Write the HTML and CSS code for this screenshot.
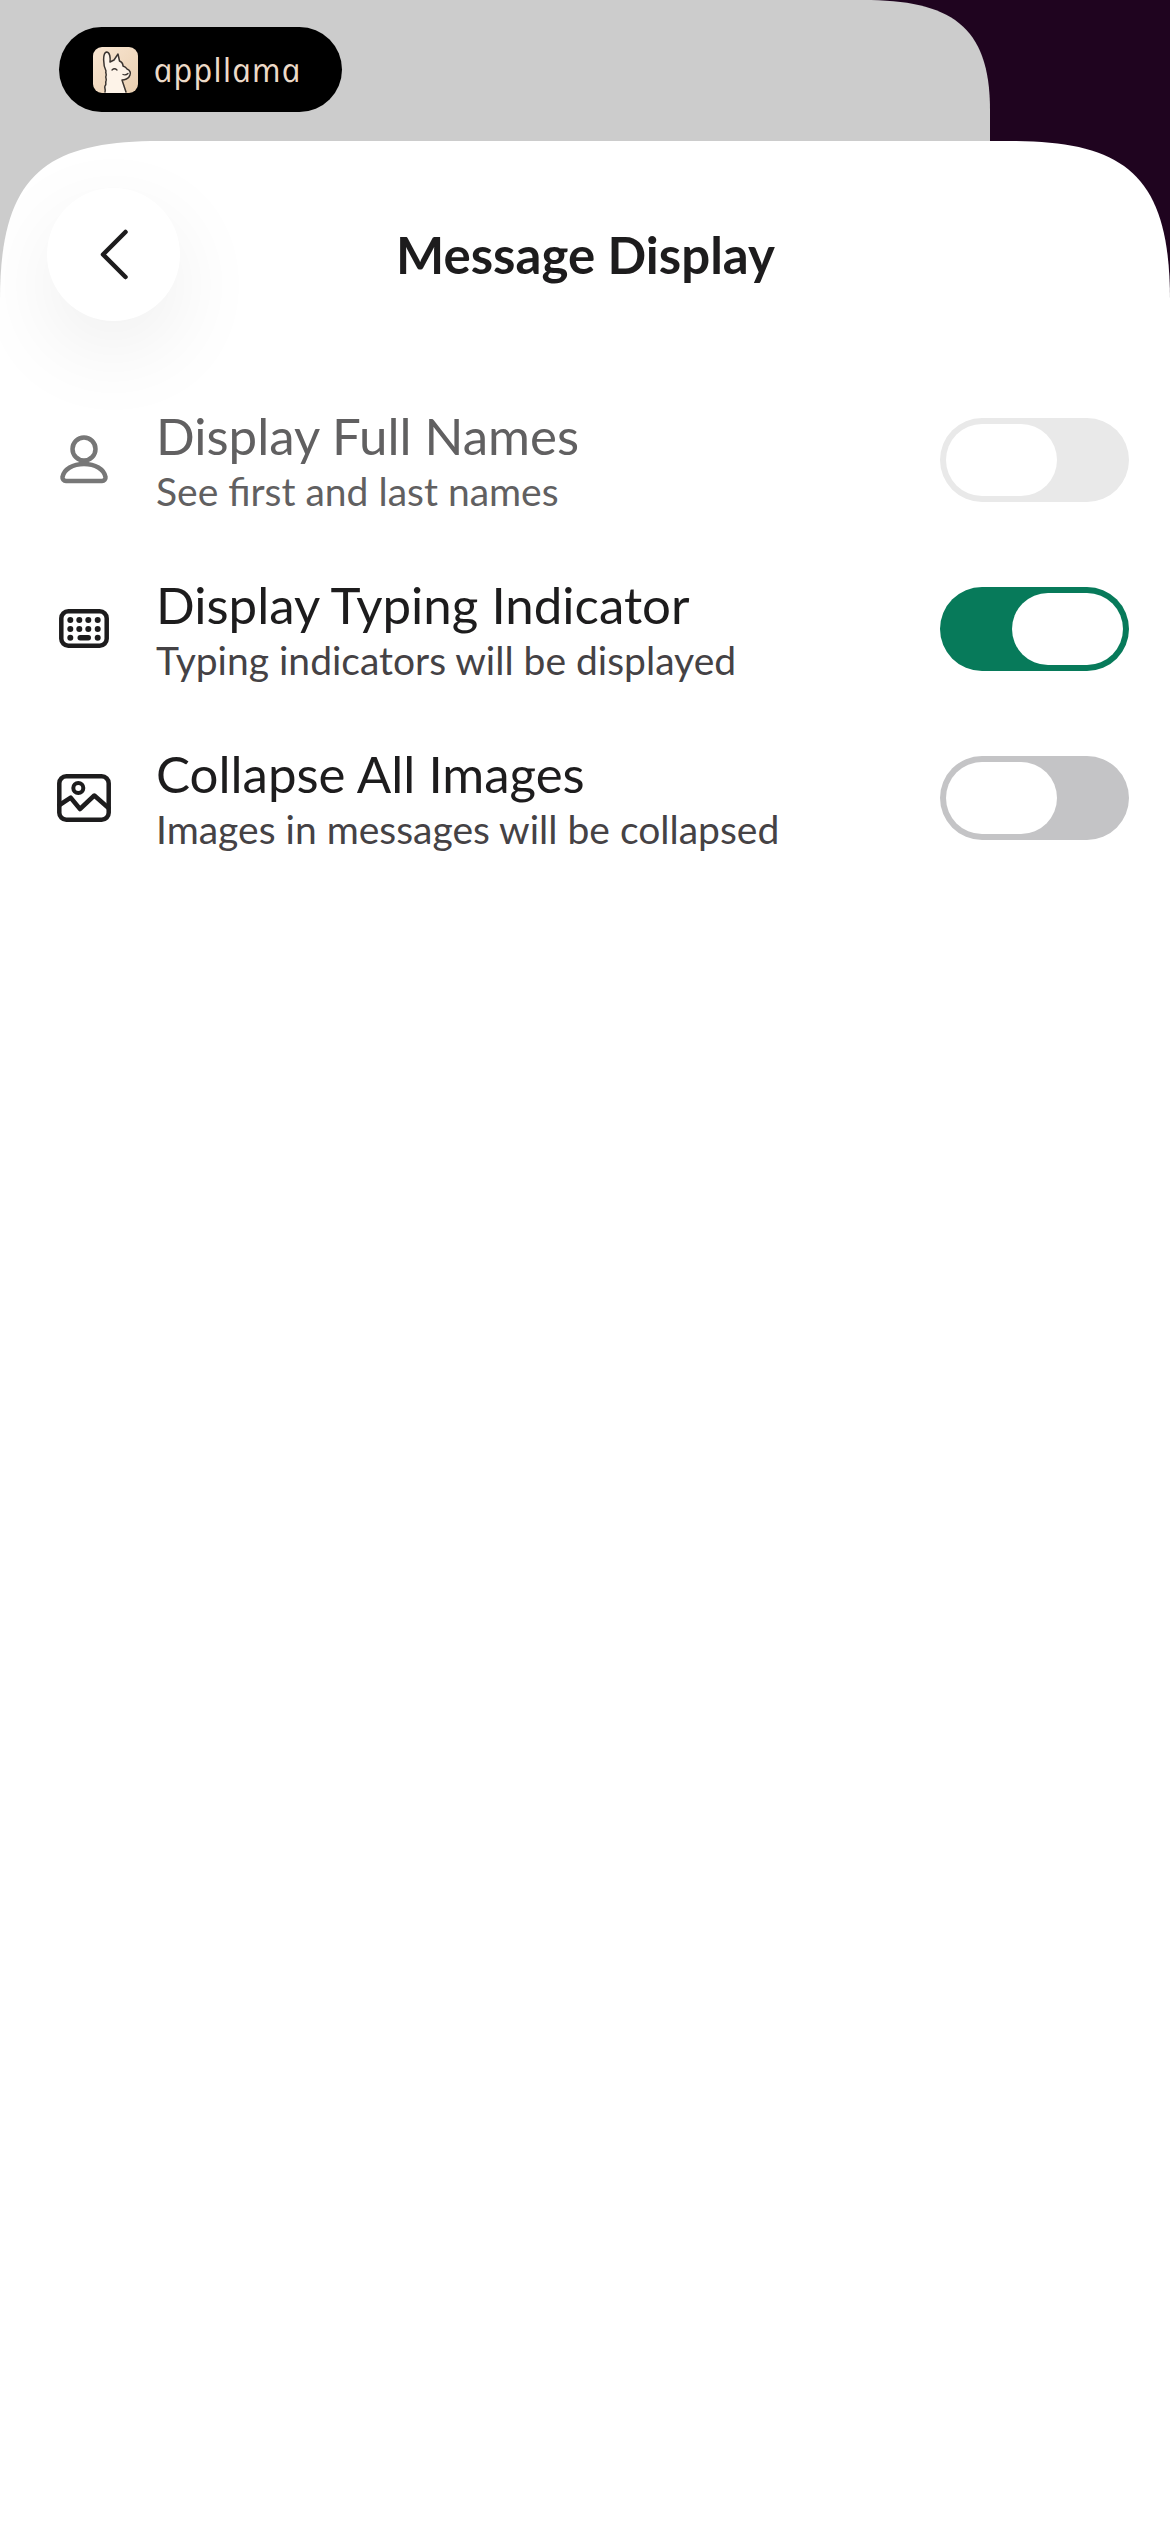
FILE: index.html
```html
<!DOCTYPE html>
<html lang="en">
<head>
<meta charset="utf-8">
<title>Message Display</title>
<link rel="stylesheet" href="styles.css">
</head>
<body>
<div class="backdrop">
  <div class="brand">
    <svg class="brand-icon" viewBox="0 0 45 46" aria-hidden="true">
      <defs><linearGradient id="lg" x1="0" y1="0" x2="1" y2="1"><stop offset="0" stop-color="#f9e6d2"/><stop offset="1" stop-color="#e9cfb0"/></linearGradient></defs>
      <rect width="45" height="46" rx="9" fill="url(#lg)"/>
      <path d="M13 24 C10 18 9.500 6 13.500 5 C17 5 17.500 11 17 15 L21 13 L25 7 L26.500 14 C29 15 30 17 30 19 C33 20 33.500 21 34 22 C37 23 38 26 37 28 C36 32 31 33 29 33 L33 46 H12 C11 40 14 34 13 24 Z" fill="#fdf3e8"/>
      <path d="M13 24 C10 18 9.500 6 13.500 5 C17 5 17.500 11 17 15 M17 15 L21 13 L25 7 L26.500 14 C29 15 30 17 30 19 C33 20 33.500 21 34 22 C37 23 38 26 37 28 C36 32 31 33 29 33 L33 45 M13 24 c-1 2 1 3 0 5 c-1 2 1 2 0 5 c-1 2 1 3 -1 5 c-1 2 1 3 0 6" fill="none" stroke="#3a3430" stroke-width="1.500" stroke-linecap="round" stroke-linejoin="round"/>
      <path d="M19 23 q2.500 -2.500 5 0 M30 27.500 q3 1 5 -1" fill="none" stroke="#3a3430" stroke-width="1.300" stroke-linecap="round"/>
    </svg>
    <span class="brand-name">appllama</span>
  </div>
</div>
<main class="sheet">
  <header class="topbar">
    <button class="back" type="button" aria-label="Back">
      <svg viewBox="0 0 133 133" class="back-icon" aria-hidden="true"><path d="M78.500 44 L56 66.500 L78.500 89"/></svg>
    </button>
    <h1 class="title">Message Display</h1>
  </header>
  <section class="rows">
    <div class="row row-muted">
      <svg class="row-icon" viewBox="0 0 60 60" aria-hidden="true"><circle cx="30" cy="19" r="11.500"/><path d="M12 51 H48 a3.500 3.500 0 0 0 3.500-4 C50 39 41 34 30 34 S10 39 8.500 47 a3.500 3.500 0 0 0 3.500 4z"/></svg>
      <div class="row-text"><div class="row-title">Display Full Names</div><div class="row-sub">See first and last names</div></div>
      <div class="toggle toggle-disabled"><span class="thumb"></span></div>
    </div>
    <div class="row">
      <svg class="row-icon" viewBox="0 0 60 60" aria-hidden="true"><rect x="7.300" y="12.300" width="45.400" height="34.400" rx="7"/><g class="dots"><circle cx="16.300" cy="21" r="3"/><circle cx="25.300" cy="21" r="3"/><circle cx="34.300" cy="21" r="3"/><circle cx="43.700" cy="21" r="3"/><circle cx="16.300" cy="30" r="3"/><circle cx="25.300" cy="30" r="3"/><circle cx="34.300" cy="30" r="3"/><circle cx="43.700" cy="30" r="3"/><circle cx="16.300" cy="38.700" r="3"/><rect x="23.500" y="36" width="13.500" height="5.500" rx="2.700"/><circle cx="43.700" cy="38.700" r="3"/></g></svg>
      <div class="row-text"><div class="row-title">Display Typing Indicator</div><div class="row-sub">Typing indicators will be displayed</div></div>
      <div class="toggle toggle-on"><span class="thumb"></span></div>
    </div>
    <div class="row">
      <svg class="row-icon" viewBox="0 0 60 60" aria-hidden="true"><rect x="5.300" y="8.300" width="49.400" height="43.400" rx="7"/><circle cx="24.300" cy="20" r="5" class="thin"/><path d="M5.500 37 L16.700 29.700 L26 41 L40.300 27.500 L54.500 40"/></svg>
      <div class="row-text"><div class="row-title">Collapse All Images</div><div class="row-sub">Images in messages will be collapsed</div></div>
      <div class="toggle"><span class="thumb"></span></div>
    </div>
  </section>
</main>
</body>
</html>
```
FILE: styles.css
```css
* { box-sizing: border-box; }
html, body { margin: 0; padding: 0; }
body {
  width: 1170px;
  height: 2532px;
  overflow: hidden;
  background: #1f041f;
  font-family: Lato, "Liberation Sans", sans-serif;
  display: flex;
  flex-direction: column;
}
.backdrop {
  width: 990px;
  height: 320px;
  flex: none;
  background: #cccccc;
  clip-path: path("M0 0 H863 C950 0 990 25 990 110 V320 H0 Z");
  padding: 27px 0 0 59px;
}
.brand {
  width: 283px;
  height: 85px;
  background: #000;
  border-radius: 42.5px;
  display: flex;
  align-items: center;
  padding-left: 34px;
  gap: 15px;
}
.brand-icon { width: 45px; height: 46px; flex: none; }
.brand-name {
  display: inline-block;
  color: #ecdac8;
  font-family: "Open Sans", Lato, sans-serif;
  font-style: italic;
  font-weight: 400;
  font-size: 33px;
  letter-spacing: 1px;
  line-height: 40px;
  transform: skewX(12deg);
}
.sheet {
  position: relative;
  flex: 1;
  margin-top: -179px;
  background: #fff;
  clip-path: path("M0 159 C0 34 45 0 160 0 H1010 C1125 0 1170 34 1170 159 V2391 H0 Z");
  padding: 47px 41px 0 47px;
}
.topbar {
  position: relative;
  height: 133px;
  display: flex;
  align-items: center;
  justify-content: center;
}
.back {
  position: absolute;
  left: 0;
  top: 0;
  width: 133px;
  height: 133px;
  border: 0;
  padding: 0;
  border-radius: 50%;
  background: #fff;
  box-shadow: 0 30px 90px rgba(0, 0, 0, 0.07);
}
.back-icon {
  display: block;
  width: 133px;
  height: 133px;
  fill: none;
  stroke: #1d1c1d;
  stroke-width: 4.500;
  stroke-linecap: round;
  stroke-linejoin: round;
}
.title {
  margin: 0 0 0 -5px;
  font-size: 51px;
  font-weight: 700;
  color: #1d1c1d;
  line-height: 60px;
}
.rows { margin-top: 77px; display: flex; flex-direction: column; gap: 45px; margin-left: 7px; }
.row { display: flex; align-items: center; height: 124px; }
.row-icon {
  width: 60px; height: 60px; flex: none;
  fill: none; stroke: #1d1c1d; stroke-width: 4.500; stroke-linejoin: round; stroke-linecap: round;
}
.row-icon .dots { fill: #1d1c1d; stroke: none; }
.row-icon .thin { stroke-width: 4; }
.row-text { flex: 1; margin-left: 42px; }
.row-title { font-size: 51px; line-height: 61px; color: #1d1c1d; }
.row-sub { font-size: 39px; line-height: 50px; color: #454245; }
.row-muted .row-title, .row-muted .row-sub { color: #616061; }
.row-muted .row-icon { stroke: #777777; }
.toggle {
  width: 189px; height: 84px; flex: none;
  background: #c4c4c6; border-radius: 42px; padding: 6px;
  display: flex;
}
.thumb { width: 111px; height: 72px; background: #fff; border-radius: 36px; display: block; }
.toggle-on { background: #077a5a; justify-content: flex-end; }
.toggle-disabled { background: #e9e9e9; }
```
